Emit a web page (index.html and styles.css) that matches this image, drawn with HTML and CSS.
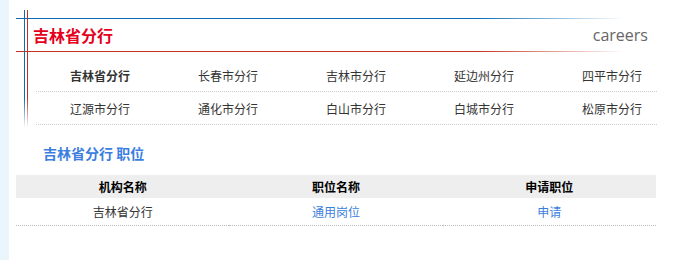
FILE: index.html
```html
<!DOCTYPE html>
<html lang="zh-CN">

<head>
    <meta charset="UTF-8">
    <meta name="viewport" content="width=device-width, initial-scale=1.0">
    <title>吉林省分行 职位</title>
    <link rel="stylesheet" href="styles.css">
</head>

<body>
    <div class="page">
        <div class="side"></div>
        <div class="main">
            <span class="vline blue"></span>
            <span class="vline red"></span>

            <div class="head">
                <h1>吉林省分行</h1>
                <span class="careers">careers</span>
            </div>

            <div class="branches">
                <div class="branch-row">
                    <a class="current">吉林省分行</a>
                    <a>长春市分行</a>
                    <a>吉林市分行</a>
                    <a>延边州分行</a>
                    <a>四平市分行</a>
                </div>
                <div class="branch-row">
                    <a>辽源市分行</a>
                    <a>通化市分行</a>
                    <a>白山市分行</a>
                    <a>白城市分行</a>
                    <a>松原市分行</a>
                </div>
            </div>

            <h2 class="section-title">吉林省分行 职位</h2>

            <table class="jobs">
                <thead>
                    <tr>
                        <th>机构名称</th>
                        <th>职位名称</th>
                        <th>申请职位</th>
                    </tr>
                </thead>
                <tbody>
                    <tr>
                        <td>吉林省分行</td>
                        <td><a href="#">通用岗位</a></td>
                        <td><a href="#">申请</a></td>
                    </tr>
                </tbody>
            </table>
        </div>
    </div>
</body>

</html>
```

FILE: styles.css
```css
body {
    margin: 0;
    font-family: "Noto Sans CJK SC", "Liberation Sans", sans-serif;
    font-size: 12px;
    color: #333;
    background-color: #fff;
}

.page {
    display: flex;
    height: 100vh;
}

.side {
    width: 9px;
    background-color: #eaf6fc;
}

.main {
    position: relative;
    width: 640px;
    margin-left: 7px;
}

/* decorative vertical lines */
.vline {
    position: absolute;
    top: 10px;
    width: 1px;
    height: 118px;
}

.vline.blue {
    left: 8px;
    background: linear-gradient(to bottom, #0b6cb5 75%, rgba(11, 108, 181, 0));
}

.vline.red {
    left: 11px;
    background: linear-gradient(to bottom, #c4321e 75%, rgba(196, 50, 30, 0));
}

.head {
    margin-top: 18px;
    height: 34px;
    display: flex;
    align-items: center;
    justify-content: space-between;
    padding: 0 8px 0 17px;
    background:
        linear-gradient(to right, #0b6cb5 72%, rgba(11, 108, 181, 0) 95%) top / 100% 1px no-repeat,
        linear-gradient(to right, #c4321e 72%, rgba(196, 50, 30, 0) 95%) bottom / 100% 1px no-repeat;
}

.head h1 {
    margin: 0;
    font-size: 16px;
    font-weight: bold;
    color: #e5001c;
}

.careers {
    font-family: "Open Sans", sans-serif;
    font-size: 16px;
    color: #666;
}

.branches {
    margin: 7px 0 0 20px;
    width: 621px;
}

.branch-row {
    display: grid;
    grid-template-columns: repeat(5, 128px);
    height: 32px;
    align-items: center;
    border-bottom: 1px dotted #ccc;
}

.branch-row a {
    text-align: center;
    color: #333;
}

.branch-row a.current {
    font-weight: bold;
}

.section-title {
    margin: 18px 0 0 27px;
    font-size: 14px;
    font-weight: bold;
    color: #3b7ee0;
    line-height: 20px;
}

.jobs {
    margin-top: 12px;
    width: 640px;
    border-collapse: collapse;
    table-layout: fixed;
}

.jobs th {
    background-color: #eee;
    height: 23px;
    padding: 0;
    font-weight: bold;
    color: #000;
}

.jobs td {
    height: 27px;
    padding: 0;
    text-align: center;
    border-bottom: 1px dotted #bbb;
}

.jobs td a {
    color: #3b7ee0;
    text-decoration: none;
}
```
